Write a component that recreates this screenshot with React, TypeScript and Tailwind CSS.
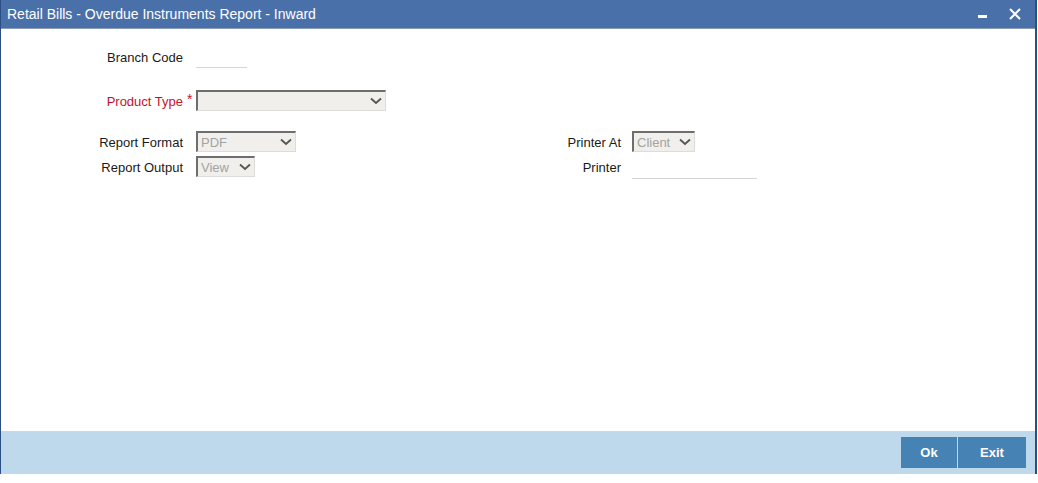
import React from 'react';

function Chevron() {
    return (
        <svg width="12" height="8" viewBox="0 0 12 8" className="shrink-0">
            <path d="M1 1.5 L6 6 L11 1.5" fill="none" stroke="#555" strokeWidth="1.8" />
        </svg>
    );
}

function Select({ value, width }: { value: string; width: string }) {
    return (
        <div className={`${width} h-[21px] flex items-center justify-between pl-[3px] pr-[3px] bg-[#f0efec] border-t-2 border-l-2 border-t-[#6e6e6e] border-l-[#6e6e6e] border-b border-r border-b-[#dcdcdc] border-r-[#dcdcdc]`}>
            <span className="text-[13px] text-[#a3a3a3] leading-none">{value}</span>
            <Chevron />
        </div>
    );
}

function Underline({ width }: { width: string }) {
    return <div className={`${width} h-[21px] border-b border-[#d4d4d4]`}></div>;
}

export default function App() {
    return (
        <div className="w-[1038px] h-[483px] bg-white font-['Liberation_Sans',Arial,sans-serif] text-[13px] text-[#1a1a1a]">
            <div className="w-[1037px] h-[474px] flex flex-col border-l border-r-2 border-l-[#2b4f82] border-r-[#2b4f82]">
                {/* title bar */}
                <div className="h-[28px] bg-[#4a70aa] flex items-center justify-between pl-[6px] pr-[14px]">
                    <span className="text-white text-[14px]">Retail Bills - Overdue Instruments Report - Inward</span>
                    <div className="flex items-center gap-[22px]">
                        <div className="w-[9px] h-[3px] bg-white mt-[4px]"></div>
                        <svg width="12" height="12" viewBox="0 0 12 12">
                            <path d="M1 1 L11 11 M11 1 L1 11" stroke="white" strokeWidth="2" />
                        </svg>
                    </div>
                </div>
                <div className="h-px bg-[#8a9cb4]"></div>

                {/* body */}
                <div className="flex-1 flex flex-col pt-[18px]">
                    <div className="flex items-center h-[21px]">
                        <span className="w-[182px] text-right pt-px">Branch Code</span>
                        <div className="ml-[13px]"><Underline width="w-[51px]" /></div>
                    </div>
                    <div className="flex items-center h-[21px] mt-[22px]">
                        <span className="w-[182px] text-right text-[#c8102e] pt-[2px]">Product Type</span>
                        <span className="w-[13px] text-[#c8102e] text-[14px] pl-[4px] -mt-[2px]">*</span>
                        <Select value="" width="w-[190px]" />
                    </div>
                    <div className="flex mt-[20px]">
                        <div className="flex flex-col gap-[4px]">
                            <div className="flex items-center h-[21px]">
                                <span className="w-[182px] text-right pt-[2px]">Report Format</span>
                                <div className="ml-[13px]"><Select value="PDF" width="w-[100px]" /></div>
                            </div>
                            <div className="flex items-center h-[21px]">
                                <span className="w-[182px] text-right pt-[2px]">Report Output</span>
                                <div className="ml-[13px]"><Select value="View" width="w-[59px]" /></div>
                            </div>
                        </div>
                        <div className="flex flex-col gap-[4px] ml-[176px]">
                            <div className="flex items-center h-[21px]">
                                <span className="w-[149px] text-right pt-[2px]">Printer At</span>
                                <div className="ml-[11px]"><Select value="Client" width="w-[63px]" /></div>
                            </div>
                            <div className="flex items-center h-[21px]">
                                <span className="w-[149px] text-right pt-[2px]">Printer</span>
                                <div className="ml-[11px] mt-[3px]"><Underline width="w-[125px]" /></div>
                            </div>
                        </div>
                    </div>
                </div>

                {/* footer */}
                <div className="h-[43px] bg-[#bed9ec] flex items-center justify-end pr-[9px]">
                    <div className="flex gap-px">
                        <button className="w-[56px] h-[31px] bg-[#4682b4] text-white font-bold text-[13px]">Ok</button>
                        <button className="w-[68px] h-[31px] bg-[#4682b4] text-white font-bold text-[13px]">Exit</button>
                    </div>
                </div>
            </div>
        </div>
    );
}
